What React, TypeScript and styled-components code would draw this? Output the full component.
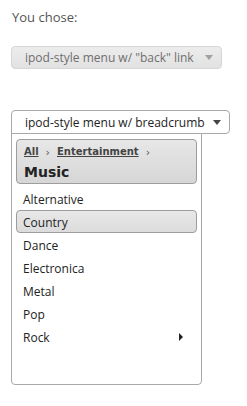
import React from "react";
import styled, { createGlobalStyle } from "styled-components";

const Global = createGlobalStyle`
  html, body { margin: 0; padding: 0; background: #fff; }
  body { font-family: "Open Sans", "Liberation Sans", sans-serif; font-size: 12px; color: #333; }
`;

const Page = styled.div`
  padding: 8px 11px 0 11px;
  display: flex;
  flex-direction: column;
  align-items: flex-start;
`;

const Label = styled.div`
  color: #555;
  font-size: 13px;
  line-height: 18px;
  padding-left: 1px;
`;

const SelectButton = styled.div<{ $disabled?: boolean; $open?: boolean; $w: number }>`
  box-sizing: border-box;
  width: ${(p) => p.$w}px;
  height: ${(p) => (p.$disabled ? 23 : 24)}px;
  display: flex;
  align-items: center;
  justify-content: space-between;
  padding: 0 8px 0 13px;
  border: 1px solid ${(p) => (p.$disabled ? "#d6d6d6" : "#a8a8a8")};
  border-radius: ${(p) => (p.$open ? "4px 4px 4px 0" : "4px")};
  background: ${(p) => (p.$disabled ? "linear-gradient(#ececec, #e2e2e2)" : "#fff")};
  color: ${(p) => (p.$disabled ? "#6f6f6f" : "#222")};
  font-size: 12px;
  white-space: nowrap;
`;

const Caret = styled.span<{ $disabled?: boolean }>`
  width: 0;
  height: 0;
  border-left: 4px solid transparent;
  border-right: 4px solid transparent;
  border-top: 5px solid ${(p) => (p.$disabled ? "#a0a0a0" : "#444")};
`;

const Menu = styled.div`
  box-sizing: border-box;
  width: 191px;
  height: 252px;
  margin-top: -1px;
  border: 1px solid #a8a8a8;
  border-radius: 0 0 4px 4px;
  background: #fff;
  padding: 5px 4px;
  display: flex;
  flex-direction: column;
`;

const Crumbs = styled.div`
  box-sizing: border-box;
  height: 45px;
  border: 1px solid #9d9d9d;
  border-radius: 4px;
  background: linear-gradient(#e7e7e7, #d6d6d6);
  padding: 4px 7px 0 7px;
  display: flex;
  flex-direction: column;
  font-family: "DejaVu Sans", Verdana, sans-serif;
  font-weight: bold;
  color: #333;
`;

const CrumbRow = styled.div`
  display: flex;
  align-items: center;
  gap: 7px;
  font-size: 10px;
  line-height: 14px;
`;

const CrumbLink = styled.a`
  color: #444;
  text-decoration: underline;
`;

const Sep = styled.span`
  font-weight: normal;
  color: #555;
  font-size: 11px;
  margin-top: 2px;
`;

const Current = styled.div`
  font-size: 14px;
  line-height: 20px;
  margin-top: 2px;
  color: #222;
`;

const List = styled.div`
  display: flex;
  flex-direction: column;
  margin-top: 3px;
`;

const Item = styled.div<{ $active?: boolean }>`
  box-sizing: border-box;
  height: 23px;
  display: flex;
  align-items: center;
  justify-content: space-between;
  padding: 1px 13px 0 6px;
  border: 1px solid ${(p) => (p.$active ? "#9d9d9d" : "transparent")};
  border-radius: 4px;
  background: ${(p) => (p.$active ? "linear-gradient(#e8e8e8, #dcdcdc)" : "transparent")};
  color: #222;
  font-size: 12px;
`;

const Arrow = styled.span`
  width: 0;
  height: 0;
  border-top: 4px solid transparent;
  border-bottom: 4px solid transparent;
  border-left: 4px solid #222;
`;

const Spacer = styled.div<{ $h: number }>`
  height: ${(p) => p.$h}px;
`;

const items = ["Alternative", "Country", "Dance", "Electronica", "Metal", "Pop", "Rock"];

export default function App() {
  return (
    <>
      <Global />
      <Page>
        <Label>You chose:</Label>
        <Spacer $h={20} />
        <SelectButton $disabled $w={211}>
          <span>ipod-style menu w/ "back" link</span>
          <Caret $disabled />
        </SelectButton>
        <Spacer $h={41} />
        <SelectButton $open $w={219}>
          <span>ipod-style menu w/ breadcrumb</span>
          <Caret />
        </SelectButton>
        <Menu>
          <Crumbs>
            <CrumbRow>
              <CrumbLink>All</CrumbLink>
              <Sep>›</Sep>
              <CrumbLink>Entertainment</CrumbLink>
              <Sep>›</Sep>
            </CrumbRow>
            <Current>Music</Current>
          </Crumbs>
          <List>
            {items.map((it) => (
              <Item key={it} $active={it === "Country"}>
                <span>{it}</span>
                {it === "Rock" && <Arrow />}
              </Item>
            ))}
          </List>
        </Menu>
      </Page>
    </>
  );
}
